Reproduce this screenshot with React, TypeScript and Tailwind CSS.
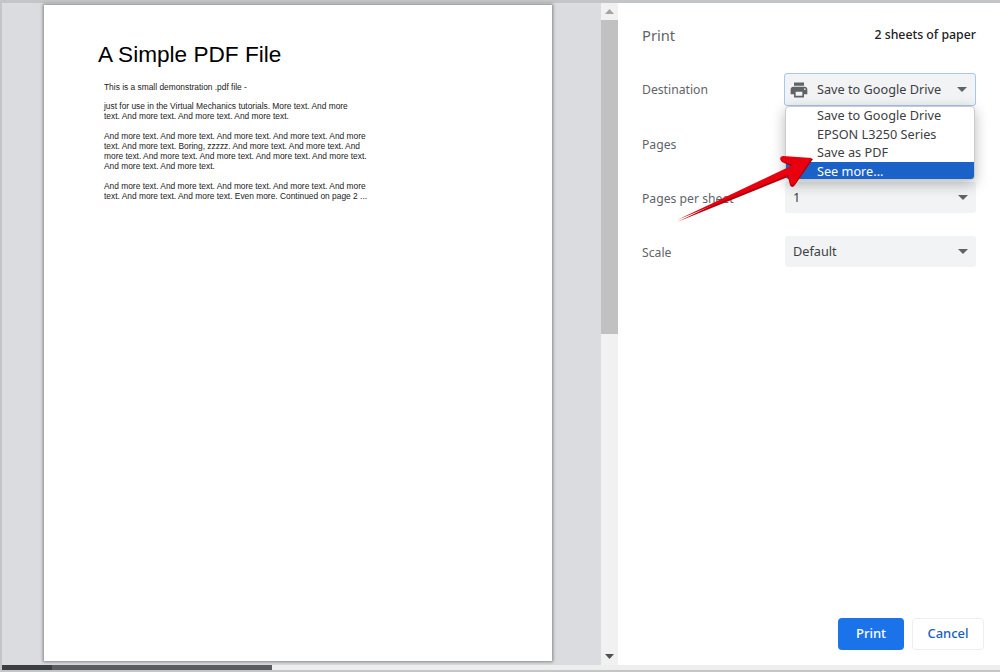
const sans = "font-['Noto_Sans','Open_Sans',sans-serif]";

function Caret() {
  return (
    <svg width="10" height="5" viewBox="0 0 10 5" className="mr-[1px]">
      <path d="M0 0 H10 L5 5 Z" fill="#5f6368" />
    </svg>
  );
}

function PrinterIcon() {
  return (
    <svg width="20" height="20" viewBox="0 0 24 24" fill="#5f6368">
      <path d="M19 8H5c-1.66 0-3 1.34-3 3v6h4v4h12v-4h4v-6c0-1.66-1.34-3-3-3zm-3 11H8v-5h8v5zm3-7c-.55 0-1-.45-1-1s.45-1 1-1 1 .45 1 1-.45 1-1 1zm-1-9H6v4h12V3z" />
    </svg>
  );
}

function SelectBox({ label }: { label: string }) {
  return (
    <div className="w-[191px] h-[31px] rounded-[3px] bg-[#f1f3f4] flex items-center justify-between pl-[8px] pr-[7px] text-[12.7px] text-[#3c4043]">
      <span>{label}</span>
      <Caret />
    </div>
  );
}

function Row({ label, children }: { label: string; children?: React.ReactNode }) {
  return (
    <div className="flex items-center justify-between h-[31px] mb-[23px] pr-[24px]">
      <span className="text-[12.2px] text-[#5f6368] mt-[3px]">{label}</span>
      {children}
    </div>
  );
}

export default function App() {
  return (
    <div className="relative w-[1000px] h-[672px] overflow-hidden bg-[#c4c5c6] pt-[3px] pl-[2px] flex flex-col">
      <div className="flex flex-1 min-h-0">
        {/* preview */}
        <div className="w-[599px] bg-[#dadce0] pl-[42px] pt-[2px] font-['Liberation_Sans',Arial,sans-serif] text-black">
          <div className="w-[508px] h-[656px] bg-white shadow-[0_0_3px_1px_rgba(0,0,0,0.4)] pt-[36px] pl-[54px]">
            <h1 className="text-[22.6px] leading-[27px]">A Simple PDF File</h1>
            <div className="pl-[6px] pt-[14px] text-[8.38px] leading-[10px] text-[#222] w-[290px] whitespace-nowrap">
              <p>This is a small demonstration .pdf file -</p>
              <p className="mt-[9px]">
                just for use in the Virtual Mechanics tutorials. More text. And more
                <br />
                text. And more text. And more text. And more text.
              </p>
              <p className="mt-[10px]">
                And more text. And more text. And more text. And more text. And more
                <br />
                text. And more text. Boring, zzzzz. And more text. And more text. And
                <br />
                more text. And more text. And more text. And more text. And more text.
                <br />
                And more text. And more text.
              </p>
              <p className="mt-[10px]">
                And more text. And more text. And more text. And more text. And more
                <br />
                text. And more text. And more text. Even more. Continued on page 2 ...
              </p>
            </div>
          </div>
        </div>

        {/* scrollbar */}
        <div className="w-[17px] bg-[#f1f1f1] flex flex-col items-center">
          <div className="h-[17px] flex items-center justify-center">
            <svg width="9" height="5" viewBox="0 0 9 5"><path d="M0 5 L4.5 0 L9 5 Z" fill="#a3a3a3" /></svg>
          </div>
          <div className="w-full h-[314px] bg-[#c1c1c1]" />
          <div className="flex-1" />
          <div className="h-[17px] flex items-center justify-center">
            <svg width="9" height="5" viewBox="0 0 9 5"><path d="M0 0 H9 L4.5 5 Z" fill="#505050" /></svg>
          </div>
        </div>

        {/* settings */}
        <div className={`flex-1 bg-white flex flex-col pl-[24px] ${sans}`}>
          <div className="flex items-center justify-between pr-[24px] h-[24px] mt-[20px] mb-[26px]">
            <span className="text-[14.7px] text-[#5f6368]">Print</span>
            <span className="text-[12.3px] font-medium text-[#202124] mt-[1px]">2 sheets of paper</span>
          </div>
          <div className="flex items-center justify-between h-[33px] mb-[22px] pr-[24px]">
            <span className="text-[12.2px] text-[#5f6368] mt-[2px]">Destination</span>
            <div className="w-[192px] h-[33px] rounded-[3px] bg-[#f1f3f4] border border-[#a8c7f0] flex items-center justify-between pl-[4px] pr-[7px] text-[12.7px] text-[#3c4043]">
              <span className="flex items-center gap-[8px] whitespace-nowrap">
                <PrinterIcon />
                Save to Google Drive
              </span>
              <Caret />
            </div>
          </div>
          <Row label="Pages" />
          <Row label="Pages per sheet">
            <SelectBox label="1" />
          </Row>
          <Row label="Scale">
            <SelectBox label="Default" />
          </Row>
          <div className="flex-1" />
          <div className="flex justify-end gap-[8px] pr-[16px] mb-[15px]">
            <button className="w-[66px] h-[32px] rounded-[4px] bg-[#1a73e8] text-white text-[13px] font-medium">Print</button>
            <button className="w-[72px] h-[32px] rounded-[4px] bg-white border border-[#eceef0] text-[#1a5fc0] text-[13px] font-medium">Cancel</button>
          </div>
        </div>
      </div>

      {/* horizontal scrollbar */}
      <div className="h-[7px] shrink-0 flex items-start bg-[#c4c5c6]">
        <div className="w-[50px] h-[5px] bg-[#3c3f42]" />
        <div className="w-[220px] h-[5px] bg-[#5a5c5e]" />
        <div className="flex-1 h-[5px] bg-[#eeeeef]" />
      </div>

      {/* destination dropdown */}
      <div className={`absolute left-[785px] top-[106px] w-[190px] h-[74px] bg-white rounded-[4px] border border-[#c9cbce] shadow-[0_4px_14px_rgba(0,0,0,0.28)] overflow-hidden text-[12.7px] leading-[18.5px] text-[#3c4043] ${sans}`}>
        <div className="pl-[31px] -mt-[1px]">Save to Google Drive</div>
        <div className="pl-[31px]">EPSON L3250 Series</div>
        <div className="pl-[31px]">Save as PDF</div>
        <div className="pl-[31px] pb-[2px] bg-[#1a62c8] text-white">See more...</div>
      </div>

      {/* annotation arrow */}
      <svg className="absolute left-[670px] top-[150px]" width="150" height="80" viewBox="0 0 150 80">
        <path d="M7 71 L118 26 L120 34 Q122 38 125 34 L143 8 L113 6 Q108 7 112 11 L123 16 Z" fill="#b0000c" transform="translate(0 1)" />
        <path d="M7 70 L118 25 L120 33 Q122 37 125 33 L142 8 L113 6 Q108 7 112 11 L123 15 Z" fill="#e8000f" />
      </svg>
    </div>
  );
}
